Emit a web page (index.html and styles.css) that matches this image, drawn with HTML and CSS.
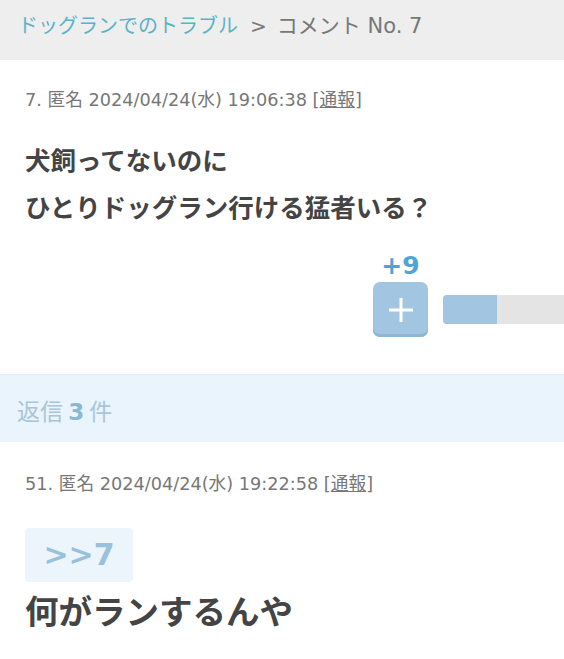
FILE: index.html
```html
<!DOCTYPE html>
<html lang="ja">
<head>
    <meta charset="UTF-8">
    <meta name="viewport" content="width=device-width, initial-scale=1.0">
    <title>コメント No. 7</title>
    <link rel="stylesheet" href="styles.css">
</head>
<body>
    <div class="breadcrumb">
        <a href="#">ドッグランでのトラブル</a><span class="sep">&gt;</span><span class="current">コメント No. 7</span>
    </div>

    <div class="comment">
        <div class="meta">7. 匿名 2024/04/24(水) 19:06:38 [<a href="#">通報</a>]</div>
        <div class="body">犬飼ってないのに<br>ひとりドッグラン行ける猛者いる？</div>
        <div class="vote">
            <div class="vote-col">
                <div class="score">+9</div>
                <button class="plus">
                    <svg width="26" height="26" viewBox="0 0 26 26"><path d="M13 1v24M1 13h24" stroke="#fff" stroke-width="3"/></svg>
                </button>
            </div>
            <div class="bar"><div class="bar-fill" style="width: 54px"></div></div>
        </div>
    </div>

    <div class="replies-head">返信 <b>3</b> 件</div>

    <div class="comment reply">
        <div class="meta">51. 匿名 2024/04/24(水) 19:22:58 [<a href="#">通報</a>]</div>
        <div class="anchor">&gt;&gt;7</div>
        <div class="body big">何がランするんや</div>
    </div>
</body>
</html>
```

FILE: styles.css
```css
body {
    margin: 0;
    font-family: "DejaVu Sans", "Noto Sans CJK JP", sans-serif;
    color: #444;
    background: #fff;
    overflow-x: hidden;
}
a {
    color: inherit;
}
.breadcrumb {
    background-color: #eeeeee;
    height: 60px;
    line-height: 50px;
    padding: 0 18px;
    font-size: 20px;
    color: #777;
    white-space: nowrap;
}
.breadcrumb a {
    color: #5cb2c8;
    text-decoration: none;
    font-family: "Noto Sans CJK JP", sans-serif;
}
.breadcrumb .sep {
    margin: 0 10px 0 12px;
}
.breadcrumb .current {
    font-size: 21px;
}
.comment {
    padding: 28px 25px 0;
}
.meta {
    font-size: 17.7px;
    color: #777;
    line-height: 24px;
}
.meta a {
    color: #777;
}
.body {
    font-family: "Noto Sans CJK JP", sans-serif;
    font-weight: bold;
    font-size: 25.5px;
    line-height: 47px;
    margin-top: 23px;
}
.vote {
    display: flex;
    justify-content: flex-end;
    align-items: flex-end;
    gap: 15px;
    margin: 23px -25px 0;
    padding-bottom: 37px;
    border-bottom: 1px solid #e3edf4;
}
.vote-col {
    display: flex;
    flex-direction: column;
    align-items: center;
}
.score {
    font-weight: bold;
    font-size: 25px;
    color: #4ea5d3;
    line-height: 28px;
    margin-bottom: 2px;
}
.plus {
    width: 55px;
    height: 55px;
    border: none;
    border-radius: 7px;
    background-color: #a2c5e2;
    box-shadow: inset 0 -3px 0 #8eb6d6;
    display: flex;
    align-items: center;
    justify-content: center;
    padding: 0;
}
.bar {
    width: 121px;
    height: 29px;
    margin-bottom: 13px;
    background-color: #e4e4e4;
    border-radius: 4px 0 0 4px;
    overflow: hidden;
}
.bar-fill {
    height: 100%;
    background-color: #a2c5e2;
}
.replies-head {
    background-color: #e9f4fc;
    height: 67px;
    line-height: 70px;
    padding: 0 17px;
    font-family: "Noto Sans CJK JP", sans-serif;
    font-size: 23px;
    color: #a9c6d8;
}
.replies-head b {
    font-family: "DejaVu Sans", sans-serif;
    color: #8ab8d4;
}
.reply {
    padding-top: 30px;
}
.anchor {
    display: inline-block;
    margin-top: 32px;
    width: 108px;
    height: 54px;
    line-height: 54px;
    text-align: center;
    border-radius: 4px;
    background-color: #edf5fc;
    color: #97c1dd;
    font-weight: bold;
    font-size: 30px;
}
.body.big {
    font-size: 33.5px;
    margin-top: 0;
    line-height: 56px;
}
```
